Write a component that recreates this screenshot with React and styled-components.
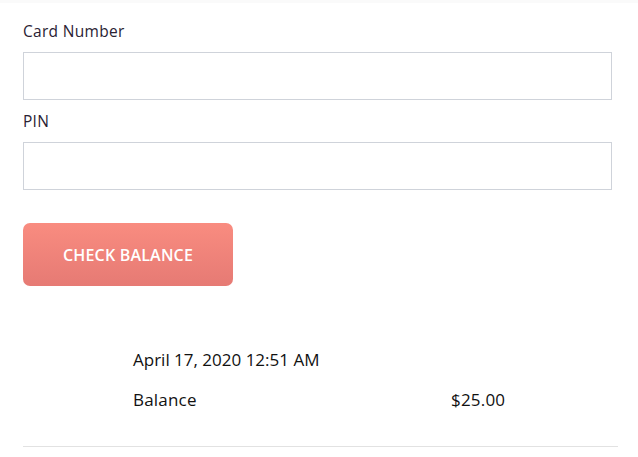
import React from "react";
import styled, {createGlobalStyle} from "styled-components";

const GlobalStyle = createGlobalStyle`
  * {
    box-sizing: border-box;
  }
  body {
    margin: 0;
    background: #fff;
    font-family: "Open Sans", "Liberation Sans", sans-serif;
    color: #222;
  }
`;

const Page = styled.div`
  border-top: 3px solid #fafafa;
  padding: 18px 20px 0 23px;
`;

const Form = styled.form`
  display: flex;
  flex-direction: column;
  width: 589px;
`;

const Field = styled.div`
  display: flex;
  flex-direction: column;
  gap: 10px;
  margin-bottom: 11px;
`;

const Label = styled.label`
  font-size: 15.5px;
  line-height: 21px;
  color: #2a2233;
  letter-spacing: 0.3px;
`;

const Input = styled.input`
  height: 48px;
  width: 100%;
  border: 1px solid #cfd3da;
  border-radius: 0;
  padding: 0 12px;
  font-size: 15px;
  font-family: inherit;
  outline: none;
`;

const Button = styled.button`
  margin-top: 22px;
  width: 210px;
  height: 63px;
  border: none;
  border-radius: 7px;
  background: linear-gradient(180deg, #f98c80 0%, #e67a74 100%);
  color: #fff;
  font-family: inherit;
  font-size: 16px;
  font-weight: 600;
  letter-spacing: 0.2px;
  text-transform: uppercase;
  cursor: pointer;
`;

const Result = styled.section`
  margin-top: 62px;
  width: 595px;
  border-bottom: 1px solid #e2e2e2;
  padding: 0 0 34px 110px;
`;

const Stamp = styled.div`
  font-size: 17px;
  line-height: 24px;
  color: #111;
  margin-bottom: 16px;
`;

const Row = styled.div`
  display: grid;
  grid-template-columns: 318px auto;
  font-size: 17px;
  line-height: 24px;
  color: #111;
  letter-spacing: 0.2px;
`;

export default function App() {
  return (
    <>
      <GlobalStyle />
      <Page>
        <Form onSubmit={(e) => e.preventDefault()}>
          <Field>
            <Label htmlFor="card">Card Number</Label>
            <Input id="card" type="text" />
          </Field>
          <Field>
            <Label htmlFor="pin">PIN</Label>
            <Input id="pin" type="password" />
          </Field>
          <Button type="submit">Check Balance</Button>
        </Form>
        <Result>
          <Stamp>April 17, 2020 12:51 AM</Stamp>
          <Row>
            <span>Balance</span>
            <span>$25.00</span>
          </Row>
        </Result>
      </Page>
    </>
  );
}
